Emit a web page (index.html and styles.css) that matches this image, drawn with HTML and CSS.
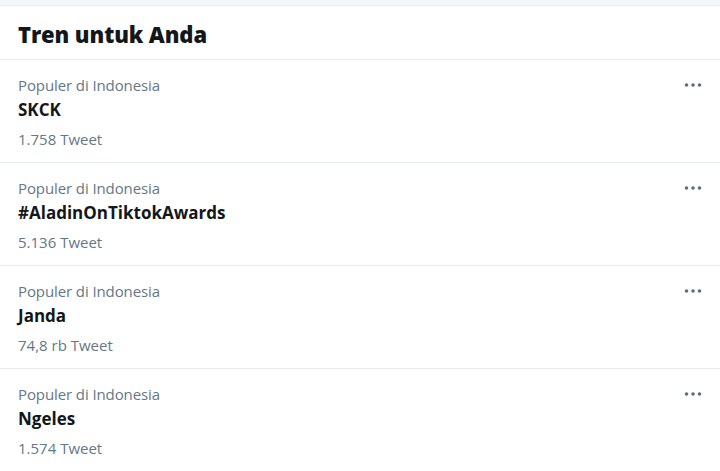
FILE: index.html
```html
<!DOCTYPE html>
<html lang="id">
<head>
<meta charset="utf-8">
<title>Tren untuk Anda</title>
<link rel="stylesheet" href="styles.css">
</head>
<body>
<div class="strip"></div>
<section class="panel">
  <h2 class="panel-title">Tren untuk Anda</h2>
  <div class="trend">
    <div class="trend-body">
      <div class="trend-meta">Populer di Indonesia</div>
      <div class="trend-name">SKCK</div>
      <div class="trend-count">1.758 Tweet</div>
    </div>
    <svg class="more" width="18" height="6" viewBox="0 0 18 6"><circle cx="2.5" cy="3" r="1.8"/><circle cx="9" cy="3" r="1.8"/><circle cx="15.5" cy="3" r="1.8"/></svg>
  </div>
  <div class="trend">
    <div class="trend-body">
      <div class="trend-meta">Populer di Indonesia</div>
      <div class="trend-name">#AladinOnTiktokAwards</div>
      <div class="trend-count">5.136 Tweet</div>
    </div>
    <svg class="more" width="18" height="6" viewBox="0 0 18 6"><circle cx="2.5" cy="3" r="1.8"/><circle cx="9" cy="3" r="1.8"/><circle cx="15.5" cy="3" r="1.8"/></svg>
  </div>
  <div class="trend">
    <div class="trend-body">
      <div class="trend-meta">Populer di Indonesia</div>
      <div class="trend-name">Janda</div>
      <div class="trend-count">74,8 rb Tweet</div>
    </div>
    <svg class="more" width="18" height="6" viewBox="0 0 18 6"><circle cx="2.5" cy="3" r="1.8"/><circle cx="9" cy="3" r="1.8"/><circle cx="15.5" cy="3" r="1.8"/></svg>
  </div>
  <div class="trend">
    <div class="trend-body">
      <div class="trend-meta">Populer di Indonesia</div>
      <div class="trend-name">Ngeles</div>
      <div class="trend-count">1.574 Tweet</div>
    </div>
    <svg class="more" width="18" height="6" viewBox="0 0 18 6"><circle cx="2.5" cy="3" r="1.8"/><circle cx="9" cy="3" r="1.8"/><circle cx="15.5" cy="3" r="1.8"/></svg>
  </div>
</section>
</body>
</html>
```
FILE: styles.css
```css
html, body {
  margin: 0;
  padding: 0;
  background: #ffffff;
}
body {
  font-family: "Open Sans", "Noto Sans", "Liberation Sans", sans-serif;
  color: #14171a;
}
.strip {
  height: 5px;
  background: #f5f8fa;
  border-bottom: 1px solid #e6ecf0;
}
.panel {
  background: #ffffff;
}
.panel-title {
  margin: 0;
  height: 54px;
  box-sizing: border-box;
  padding: 13px 18px 0;
  font-size: 22px;
  line-height: 30px;
  font-weight: 800;
  border-bottom: 1px solid #e6ecf0;
  letter-spacing: -0.1px;
}
.trend {
  display: flex;
  justify-content: space-between;
  align-items: flex-start;
  height: 103px;
  box-sizing: border-box;
  padding: 15px 18px 0;
  border-bottom: 1px solid #e6ecf0;
}
.trend-meta {
  font-size: 15px;
  line-height: 20px;
  color: #657786;
  letter-spacing: -0.1px;
}
.trend-name {
  margin-top: 3px;
  font-size: 17px;
  line-height: 23px;
  font-weight: 700;
}
.trend-count {
  margin-top: 8px;
  font-size: 15px;
  line-height: 20px;
  color: #657786;
}
.more {
  fill: #5b6f7f;
  margin-top: 7px;
}
```
